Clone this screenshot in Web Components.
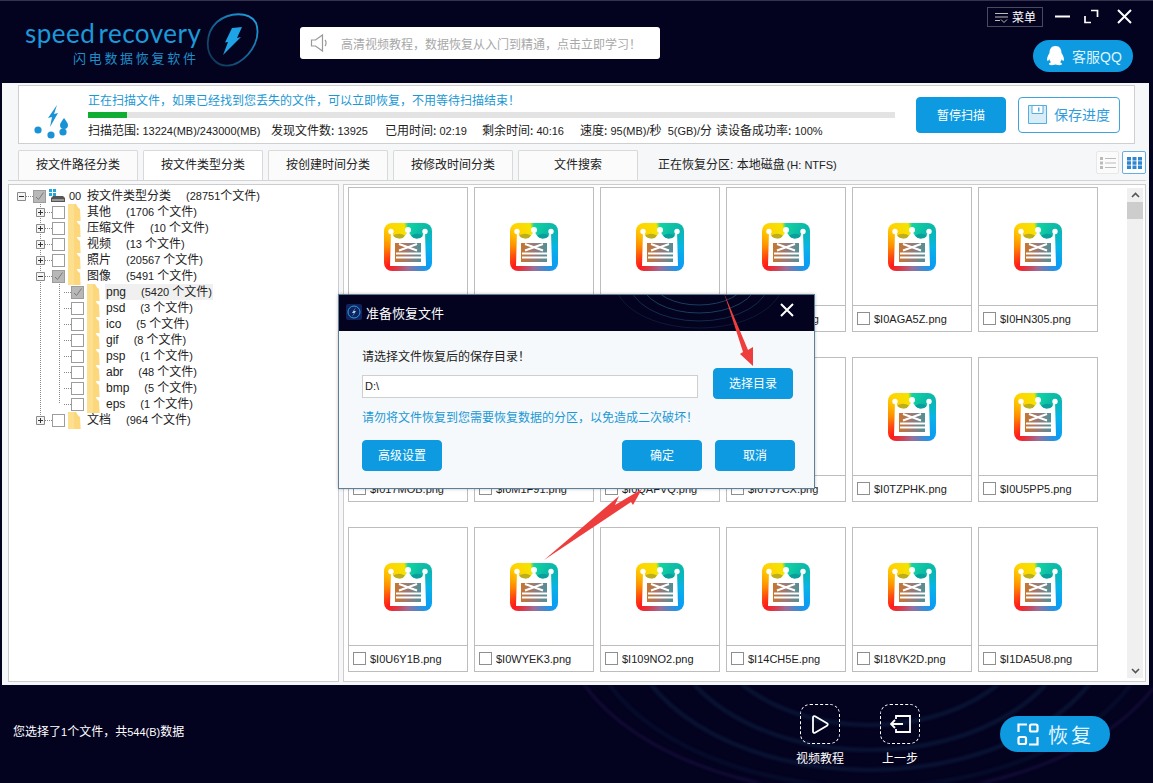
<!DOCTYPE html>
<html lang="zh">
<head>
<meta charset="utf-8">
<title>speed recovery</title>
<style>
  html, body { margin: 0; height: 100%; background: #03021f; }
  body { font: 12px "Liberation Sans", "Noto Sans CJK SC", sans-serif; color: #222; overflow: hidden; }
</style>
</head>
<body>
<sr-app>
  <sr-header slot="header"></sr-header>
  <sr-status slot="main"></sr-status>
  <sr-tabs slot="main">
    <sr-tab>按文件路径分类</sr-tab>
    <sr-tab active>按文件类型分类</sr-tab>
    <sr-tab>按创建时间分类</sr-tab>
    <sr-tab>按修改时间分类</sr-tab>
    <sr-tab>文件搜索</sr-tab>
    <span slot="info">正在恢复分区: 本地磁盘<small style="font-size:11px;margin-left:2px">(H: NTFS)</small></span>
  </sr-tabs>
  <sr-panels slot="main">
    <sr-tree slot="tree">
      <sr-tree-row depth="0" toggle="minus" check="on" icon="disk" num="00" count="(28751个文件)">按文件类型分类</sr-tree-row>
      <sr-tree-row depth="1" toggle="plus" count="(1706 个文件)">其他</sr-tree-row>
      <sr-tree-row depth="1" toggle="plus" count="(10 个文件)">压缩文件</sr-tree-row>
      <sr-tree-row depth="1" toggle="plus" count="(13 个文件)">视频</sr-tree-row>
      <sr-tree-row depth="1" toggle="plus" count="(20567 个文件)">照片</sr-tree-row>
      <sr-tree-row depth="1" toggle="minus" check="on" count="(5491 个文件)">图像</sr-tree-row>
      <sr-tree-row depth="2" check="on" selected count="(5420 个文件)">png</sr-tree-row>
      <sr-tree-row depth="2" count="(3 个文件)">psd</sr-tree-row>
      <sr-tree-row depth="2" count="(5 个文件)">ico</sr-tree-row>
      <sr-tree-row depth="2" count="(8 个文件)">gif</sr-tree-row>
      <sr-tree-row depth="2" count="(1 个文件)">psp</sr-tree-row>
      <sr-tree-row depth="2" count="(48 个文件)">abr</sr-tree-row>
      <sr-tree-row depth="2" count="(5 个文件)">bmp</sr-tree-row>
      <sr-tree-row depth="2" last count="(1 个文件)">eps</sr-tree-row>
      <sr-tree-row depth="1" toggle="plus" last count="(964 个文件)">文档</sr-tree-row>
    </sr-tree>
    <sr-file-grid slot="files">
      <sr-file-card></sr-file-card>
      <sr-file-card></sr-file-card>
      <sr-file-card></sr-file-card>
      <sr-file-card>$I0A2K7E.png</sr-file-card>
      <sr-file-card>$I0AGA5Z.png</sr-file-card>
      <sr-file-card>$I0HN305.png</sr-file-card>
      <sr-file-card>$I017MOB.png</sr-file-card>
      <sr-file-card>$I0M1F91.png</sr-file-card>
      <sr-file-card>$I0QAFVQ.png</sr-file-card>
      <sr-file-card>$I0TJ7CX.png</sr-file-card>
      <sr-file-card>$I0TZPHK.png</sr-file-card>
      <sr-file-card>$I0U5PP5.png</sr-file-card>
      <sr-file-card>$I0U6Y1B.png</sr-file-card>
      <sr-file-card>$I0WYEK3.png</sr-file-card>
      <sr-file-card>$I109NO2.png</sr-file-card>
      <sr-file-card>$I14CH5E.png</sr-file-card>
      <sr-file-card>$I18VK2D.png</sr-file-card>
      <sr-file-card>$I1DA5U8.png</sr-file-card>
    </sr-file-grid>
  </sr-panels>
  <sr-footer slot="footer"></sr-footer>
  <sr-dialog slot="overlay"></sr-dialog>
  <sr-arrows slot="overlay"></sr-arrows>
</sr-app>

<script>
// little base class, every component just returns its markup
class Comp extends HTMLElement {
  constructor() {
    super();
    this.attachShadow({ mode: "open" });
  }
  connectedCallback() {
    this.shadowRoot.innerHTML = this.render();
  }
}

const BLUE = "#0d9ae0";

class SrApp extends Comp {
  render() {
    return `<style>
      :host { display: flex; flex-direction: column; width: 1153px; height: 783px; position: relative; overflow: hidden; }
      .main { flex: 1; min-height: 0; display: flex; flex-direction: column; background: #f5f7f8; margin: 0 4px 0 2px; padding: 2px 3px 3px 6px; box-sizing: border-box; }
    </style>
    <slot name="header"></slot>
    <div class="main"><slot name="main"></slot></div>
    <slot name="footer"></slot>
    <slot name="overlay"></slot>`;
  }
}

class SrHeader extends Comp {
  render() {
    return `<style>
      :host { display: flex; height: 83px; box-sizing: border-box; background: #03021f; border-top: 1px solid #34324c; padding-right: 20px; color: #fff; }
      .brand { width: 180px; margin-left: 25px; display: flex; flex-direction: column; }
      .name { font: 400 26px/30px Lato, sans-serif; color: #1b99d8; margin-top: 17px; white-space: nowrap; letter-spacing: .5px; word-spacing: -4px; }
      .sub { font: 13px/16px "Noto Sans CJK SC", sans-serif; color: #1f8fc9; letter-spacing: 2.7px; margin-top: 2px; margin-left: 48px; white-space: nowrap; }
      .ring { width: 60px; height: 70px; margin: 8px 0 0 -2px; flex: none; }
      .notice { width: 360px; height: 32px; margin: 26px 0 0 37px; background: #fff; border-radius: 3px; display: flex; align-items: center; box-sizing: border-box; padding-left: 10px; color: #a8a8a8; white-space: nowrap; flex: none; }
      .notice svg { margin-right: 11px; }
      .right { margin-left: auto; display: flex; flex-direction: column; align-items: flex-end; }
      .ctl { display: flex; align-items: center; margin-top: 5px; height: 21px; }
      .menu { width: 56px; height: 20px; box-sizing: border-box; border: 1px solid #4a4a5e; display: flex; align-items: center; justify-content: center; gap: 3px; font-size: 12px; margin-right: 12px; }
      .ctl svg.b { display: block; }
      .qq { width: 100px; height: 32px; margin-top: 13px; border-radius: 16px; background: ${BLUE}; display: flex; align-items: center; box-sizing: border-box; padding-left: 13px; gap: 7px; font-size: 14px; color: #dff3fd; }
    </style>
    <div class="brand">
      <div class="name">speed recovery</div>
      <div class="sub">闪电数据恢复软件</div>
    </div>
    <svg class="ring" viewBox="0 0 60 70">
      <defs><linearGradient id="rg" x1="1" y1="0" x2="0" y2="1"><stop offset="0" stop-color="#22a6ea"/><stop offset=".55" stop-color="#14608f"/><stop offset="1" stop-color="#0d2f4a"/></linearGradient></defs>
      <path d="M12 52C2 44 2 24 14 13 26 3 46 2 53 14c5 14-3 30-17 39-8 5-18 5-24-1z" fill="none" stroke="url(#rg)" stroke-width="1.800"/>
      <path d="M29 19l10-1-5 11 4-1-18 18 5-13-3 .5z" fill="#1ea3e6"/>
    </svg>
    <div class="notice">
      <svg width="20" height="20" viewBox="0 0 20 20" fill="none" stroke="#999" stroke-width="1.200"><path d="M1.500 7h4l7-5v16l-7-5h-4z"/><path d="M15 7c1.400 1.500 1.400 4.500 0 6"/></svg>
      <span>高清视频教程，数据恢复从入门到精通，点击立即学习！</span>
    </div>
    <div class="right">
      <div class="ctl">
        <div class="menu">
          <svg width="15" height="12" viewBox="0 0 15 12" fill="none" stroke="#bbb"><path d="M1 2.500h13M1 6h13M1 9.500h5M7 8.500l3 3 3-3"/></svg>
          <span>菜单</span>
        </div>
        <svg class="b" width="15" height="15" viewBox="0 0 15 15" stroke="#fff" stroke-width="2" fill="none" style="margin-right:14px"><path d="M0 7.500h15"/></svg>
        <svg class="b" width="15" height="15" viewBox="0 0 15 15" stroke="#fff" stroke-width="1.700" fill="none" style="margin-right:18px"><path d="M1 7v6.500h6M7 1.500h6.500V8"/></svg>
        <svg class="b" width="15" height="15" viewBox="0 0 15 15" stroke="#fff" stroke-width="2" fill="none" style="margin-right:1px"><path d="M1 1l13 13M14 1L1 14"/></svg>
      </div>
      <div class="qq">
        <svg width="19" height="20" viewBox="0 0 19 20" fill="#fff"><path d="M9.500 0C5 0 3.500 3.500 3.500 7 2.500 8.500 1 11 1 13.500c0 1.200.6 1.500 1.400 1 .3-.3.600-.7.900-1.200.3 1.200 1 2.300 1.800 3-1.200.4-2.100 1-2.100 1.800C3 19.500 6 19.600 9.500 18.500c3.500 1.100 6.500 1 6.500-.4 0-.8-.9-1.400-2.100-1.800.8-.7 1.500-1.800 1.800-3 .3.500.6.900.9 1.200.8.500 1.400.2 1.400-1 0-2.500-1.500-5-2.500-6.500 0-3.500-1.500-7-6-7z"/></svg>
        <span>客服QQ</span>
      </div>
    </div>`;
  }
}

class SrStatus extends Comp {
  render() {
    return `<style>
      :host { display: flex; height: 59px; box-sizing: border-box; margin: 0 11px 0 10px; background: #fff; border: 1px solid #cfcfcf; }
      .drop { width: 69px; flex: none; }
      .drop svg { display: block; margin: 19px 0 0 15px; }
      .col { width: 807px; flex: none; }
      .msg { color: #1b98d4; line-height: 17px; margin-top: 7px; white-space: nowrap; }
      .bar { height: 6px; margin-top: 2px; background: #e3e3e3; }
      .bar i { display: block; height: 100%; width: 39px; background: #10ad33; }
      .stats { display: flex; margin-top: 3px; line-height: 17px; white-space: nowrap; font-size: 11px; }
      .stats b { font: 12px "Noto Sans CJK SC", sans-serif; }
      .stats span { flex: none; }
      .btns { display: flex; margin-left: 21px; margin-top: 11px; gap: 12px; }
      sr-btn { width: 90px; height: 36px; }
      sr-btn.out { width: 102px; font-size: 14px; }
    </style>
    <div class="drop">
      <svg width="40" height="36" viewBox="0 0 40 36" fill="#1a93d6">
        <path d="M21 0l-3 9 4-1-8 14 2-10-4 1z" transform="translate(2 0)"/>
        <path d="M30 13c2 3 4 5 4 7a4 4 0 0 1-8 0c0-2 2-4 4-7z"/>
        <circle cx="4" cy="25" r="3.600"/><circle cx="17" cy="30" r="3.600"/><circle cx="29" cy="27" r="3.600"/>
      </svg>
    </div>
    <div class="col">
      <div class="msg">正在扫描文件，如果已经找到您丢失的文件，可以立即恢复，不用等待扫描结束！</div>
      <div class="bar"><i></i></div>
      <div class="stats">
        <span style="width:183px"><b>扫描范围:</b> 13224(MB)/243000(MB)</span>
        <span style="width:114px"><b>发现文件数:</b> 13925</span>
        <span style="width:97px"><b>已用时间:</b> 02:19</span>
        <span style="width:98px"><b>剩余时间:</b> 40:16</span>
        <span style="width:136px"><b>速度:</b> 95(MB)/<b>秒</b>&nbsp; 5(GB)/<b>分</b></span>
        <span><b>读设备成功率:</b> 100%</span>
      </div>
    </div>
    <div class="btns">
      <sr-btn>暂停扫描</sr-btn>
      <sr-btn class="out" outline>
        <svg slot="icon" width="19" height="19" viewBox="0 0 19 19"><path d="M.5.5h18v18H.5z" fill="#d9edf9" stroke="#55aee0"/><path d="M4 .5h11v8H4z" fill="#fff" stroke="#55aee0"/><path d="M10 2.500h1.500v4H10z" fill="#55aee0"/></svg>
        保存进度
      </sr-btn>
    </div>`;
  }
}

class SrBtn extends Comp {
  render() {
    const out = this.hasAttribute("outline");
    return `<style>
      :host { display: block; }
      div { height: 100%; box-sizing: border-box; border-radius: 4px; display: flex; align-items: center; justify-content: center; gap: 7px; padding-bottom: 2px;
        background: ${out ? "#fff" : BLUE}; color: ${out ? "#2f9cdc" : "#fff"}; border: 1px solid ${out ? "#3fa3de" : BLUE}; white-space: nowrap; }
    </style><div><slot name="icon"></slot><slot></slot></div>`;
  }
}

class SrTabs extends Comp {
  render() {
    return `<style>
      :host { display: flex; align-items: flex-start; height: 31px; box-sizing: border-box; margin-top: 6px; border-bottom: 1px solid #d4d4d4; padding-left: 10px; gap: 5px; }
      .info { margin-left: 15px; line-height: 30px; white-space: nowrap; }
      .view { margin-left: auto; display: flex; gap: 3px; margin-top: 1px; }
      .v { width: 23px; height: 23px; box-sizing: border-box; border: 1px solid #e8e8e8; background: #fbfbfb; border-radius: 2px; display: flex; align-items: center; justify-content: center; }
      .v.on { border-color: #64aee2; background: #fff; width: 24px; }
    </style>
    <slot></slot>
    <div class="info"><slot name="info"></slot></div>
    <div class="view">
      <div class="v"><svg width="16" height="12" viewBox="0 0 16 12" fill="#bbb"><path d="M0 0h3v3H0zM0 4.500h3v3H0zM0 9h3v3H0zM5 1h11v1H5zM5 5.500h11v1H5zM5 10h11v1H5z"/></svg></div>
      <div class="v on"><svg width="15" height="12" viewBox="0 0 15 12" fill="#2d86cf"><path d="M0 0h4v3.400H0zM5.500 0h4v3.400h-4zM11 0h4v3.400h-4zM0 4.300h4v3.400H0zM5.500 4.300h4v3.400h-4zM11 4.300h4v3.400h-4zM0 8.600h4V12H0zM5.500 8.600h4V12h-4zM11 8.600h4V12h-4z"/></svg></div>
    </div>`;
  }
}

class SrTab extends Comp {
  render() {
    return `<style>
      :host { display: block; width: 120px; height: 30px; box-sizing: border-box; border: 1px solid #d9d9d9; border-bottom: 0; border-radius: 2px 2px 0 0; background: ${this.hasAttribute("active") ? "#fff" : "#fbfbfb"}; text-align: center; line-height: 29px; white-space: nowrap; }
    </style><slot></slot>`;
  }
}

class SrPanels extends Comp {
  render() {
    return `<style>
      :host { display: flex; flex: 1; min-height: 0; gap: 4px; margin-top: 3px; }
    </style>
    <slot name="tree"></slot><slot name="files"></slot>`;
  }
}

class SrTree extends Comp {
  render() {
    return `<style>
      :host { display: block; width: 331px; box-sizing: border-box; flex: none; background: #fff; border: 1px solid #ccc; padding-top: 3px; }
    </style><slot></slot>`;
  }
}

class SrTreeRow extends Comp {
  render() {
    const depth = +this.getAttribute("depth");
    const toggle = this.getAttribute("toggle");
    const checked = this.getAttribute("check") === "on";
    const icon = this.getAttribute("icon");
    const num = this.getAttribute("num");
    const count = this.getAttribute("count").replace("个文件", '<span class="c">个文件</span>');
    const last = this.hasAttribute("last");
    const dots = "repeating-linear-gradient(to bottom,#888 0 1px,transparent 1px 2px)";
    // vertical guide lines are painted on the row itself
    const guides = [];
    if (depth >= 1) guides.push(`${dots} 31px 0/1px ${depth === 1 && last ? "8px" : "100%"} no-repeat`);
    if (depth === 2) guides.push(`${dots} 50px 0/1px ${last ? "8px" : "100%"} no-repeat`);
    const pad = [8, 27, 46][depth];
    const tog = toggle
      ? `<svg class="t" width="9" height="9" viewBox="0 0 9 9"><path d="M.5.5h8v8h-8z" fill="#f4f4f4" stroke="#8a8a8a"/><path d="M2 4.500h5${toggle === "plus" ? "M4.500 2v5" : ""}" stroke="#333"/></svg>`
      : `<span class="t"></span>`;
    const pic = icon === "disk"
      ? `<svg class="pic" width="16" height="14" viewBox="0 0 16 14"><path d="M0 0h3v3H0zM4 0h3v3H4zM0 4h3v3H0zM4 4h3v3H4z" fill="#22a5d8"/><path d="M2 9l2-2h10l2 2v4H2z" fill="#555"/><path d="M3 11h12" stroke="#ddd"/></svg>`
      : `<svg class="pic" width="13" height="17" viewBox="0 0 13 17"><path d="M0 0h8l2 3.500 2 1.500.6 12H0z" fill="#fcd77c"/><path d="M0 0h6v17H0z" fill="#fde08f"/></svg>`;
    return `<style>
      :host { display: flex; align-items: center; height: 16px; padding-left: ${pad}px; background: ${guides.join(",") || "none"}; white-space: nowrap; font-size: 11px; }
      .t { width: 9px; height: 9px; flex: none; display: block; ${depth === 2 ? "" : "background:#fff;"} }
      .h { width: 7px; height: 1px; flex: none; background: repeating-linear-gradient(to right,#888 0 1px,transparent 1px 2px); }
      .box { width: 13px; height: 13px; box-sizing: border-box; flex: none; border: 1px solid #9c9c9c; background: ${checked ? "#b8b8b8" : "#fff"}; display: flex; }
      .pic { flex: none; margin-left: 3px; display: block; }
      .num { margin-left: 4px; width: 13px; flex: none; }
      .name { font-size: 12px; margin-left: 1px; display: flex; height: 16px; line-height: 16px; }
      .count { margin-left: 15px; line-height: 16px; }
      .c { font-size: 12px; }
      .sel { display: flex; background: ${this.hasAttribute("selected") ? "#f0f0f0" : "transparent"}; padding-right: 1px; margin-left: ${depth === 0 ? 4 : 5}px; }
    </style>
    ${tog}<span class="h"></span>
    <span class="box">${checked ? `<svg width="11" height="11" viewBox="0 0 11 11" fill="none" stroke="#7c7c7c"><path d="M2 6l2.500 2.500L9.500 1.500"/></svg>` : ""}</span>
    ${pic}${num ? `<span class="num">${num}</span>` : ""}
    <span class="sel"><span class="name"><slot></slot></span><span class="count">${count}</span></span>`;
  }
}

class SrFileGrid extends Comp {
  render() {
    return `<style>
      :host { display: flex; flex: 1; min-width: 0; background: #fff; border: 1px solid #ccc; overflow: hidden; }
      .cells { flex: 1; display: grid; grid-template-columns: repeat(6, 120px); grid-auto-rows: 145px; column-gap: 6px; row-gap: 25px; padding: 2px 0 0 4px; align-content: start; overflow: hidden; }
      .sb { width: 16px; flex: none; margin: 3px 2px 3px 0; background: #f0f0f0; display: flex; flex-direction: column; align-items: center; }
      .sb svg { display: block; flex: none; margin: 4px 0; }
      .thumb { width: 16px; height: 17px; background: #cdcdcd; }
      .sp { flex: 1; }
    </style>
    <div class="cells"><slot></slot></div>
    <div class="sb">
      <svg width="9" height="6" viewBox="0 0 9 6" fill="none" stroke="#555" stroke-width="1.600"><path d="M1 5l3.500-3.500L8 5"/></svg>
      <div class="thumb"></div><div class="sp"></div>
      <svg width="9" height="6" viewBox="0 0 9 6" fill="none" stroke="#555" stroke-width="1.600"><path d="M1 1l3.500 3.500L8 1"/></svg>
    </div>`;
  }
}

class SrFileCard extends Comp {
  render() {
    return `<style>
      :host { display: flex; flex-direction: column; box-sizing: border-box; border: 1px solid #bdbdbd; background: #fff; }
      .img { flex: 1; display: flex; align-items: center; justify-content: center; }
      .lab { height: 25px; flex: none; border-top: 1px solid #bdbdbd; display: flex; align-items: center; padding-left: 4px; font-size: 11px; white-space: nowrap; overflow: hidden; }
      .box { width: 13px; height: 13px; box-sizing: border-box; border: 1px solid #8f8f8f; margin-right: 4px; flex: none; }
    </style>
    <div class="img"><sr-app-icon></sr-app-icon></div>
    <div class="lab"><span class="box"></span><slot></slot></div>`;
  }
}

class SrAppIcon extends Comp {
  render() {
    return `<style>
      :host { display: block; width: 48px; height: 48px; border-radius: 8px; overflow: hidden;
        background: conic-gradient(from 0deg at 50% 50%, #12d5a0 0deg, #0bb8a8 45deg, #08b4e6 90deg, #0a9cf5 135deg, #9a6f9a 180deg, #ff1a1a 225deg, #ff8a00 270deg, #ffd400 315deg, #f4e400 350deg, #12d5a0 360deg); }
      svg { display: block; }
    </style>
    <svg width="48" height="48" viewBox="0 0 48 48">
      <defs><linearGradient id="doc"><stop offset="0" stop-color="#c9752c"/><stop offset=".5" stop-color="#9b7a78"/><stop offset="1" stop-color="#4f9098"/></linearGradient></defs>
      <path d="M7 8Q10 15 15.500 15.500 21 15 24 7 27 15 32.500 15.500 38 15 41 8L42 43H6z" fill="#fff"/>
      <circle cx="7" cy="8.500" r="2.700" fill="#fff"/><circle cx="24" cy="7" r="3" fill="#fff"/><circle cx="41" cy="8.500" r="2.700" fill="#fff"/>
      <path d="M9 12.500Q15 9 21 12.500 19 16 15.500 15.500 11 15.500 9 12.500z" fill="#bcae1c"/>
      <path d="M27 12.500Q33 9 39 12.500 37 16 32.500 15.500 29 15.500 27 12.500z" fill="#0a9f9a"/>
      <rect x="11" y="20" width="26" height="19" fill="url(#doc)"/>
      <path d="M15 21l18 6.500M33 21L15 27.500M12 30.500h25M12 34.500h25" stroke="#fff" stroke-width="2" fill="none"/>
    </svg>`;
  }
}

class SrDialog extends Comp {
  render() {
    return `<style>
      :host { position: absolute; left: 338px; top: 294px; width: 477px; height: 195px; box-sizing: border-box; border: 1px solid #5f7f98; background: #f6f9fb; display: flex; flex-direction: column; box-shadow: 0 0 3px rgba(0,0,0,.25); }
      .title { height: 36px; flex: none; background: #03021f; color: #fff; display: flex; align-items: center; padding: 0 20px 2px 7px; box-sizing: border-box; font-size: 13px; overflow: hidden; position: relative; }
      .title .swirl { position: absolute; left: 270px; top: 0; filter: blur(.6px); }
      .title span { margin-left: 4px; position: relative; }
      .title .x { margin-left: auto; margin-bottom: 5px; position: relative; }
      .body { padding: 16px 19px 0 23px; flex: 1; display: flex; flex-direction: column; }
      .lab { line-height: 20px; }
      .row { display: flex; align-items: center; margin-top: 2px; }
      .inp { width: 336px; height: 23px; box-sizing: border-box; border: 1px solid #cfcfcf; background: #fff; line-height: 21px; padding-left: 2px; font-size: 11px; margin-top: 5px; }
      .row sr-btn { width: 80px; height: 31px; margin-left: 15px; margin-top: -1px; }
      .warn { color: #1b98d4; margin-top: 9px; line-height: 20px; white-space: nowrap; }
      .foot { display: flex; margin-top: 12px; }
      .foot sr-btn { width: 80px; height: 31px; }
      .foot sr-btn:nth-child(2) { margin-left: auto; margin-right: 13px; }
    </style>
    <div class="title">
      <svg class="swirl" width="210" height="36" viewBox="0 0 210 36" fill="none" stroke="#2d6f92" opacity=".55">
        <ellipse cx="90" cy="-14" rx="46" ry="24"/><ellipse cx="90" cy="-14" rx="58" ry="32"/><ellipse cx="90" cy="-14" rx="70" ry="40" opacity=".7"/><ellipse cx="90" cy="-14" rx="84" ry="47" opacity=".4"/>
      </svg>
      <svg width="16" height="16" viewBox="0 0 16 16" style="position:relative"><rect width="16" height="16" rx="2" fill="#10235e"/><circle cx="8" cy="8" r="6" fill="none" stroke="#2a9fe0"/><path d="M10 3L6 9h2l-2 4 4-6H8z" fill="#9fd6f5"/></svg>
      <span>准备恢复文件</span>
      <svg class="x" width="14" height="14" viewBox="0 0 14 14" stroke="#fff" stroke-width="2"><path d="M1 1l12 12M13 1L1 13"/></svg>
    </div>
    <div class="body">
      <div class="lab">请选择文件恢复后的保存目录！</div>
      <div class="row"><div class="inp">D:\\</div><sr-btn>选择目录</sr-btn></div>
      <div class="warn">请勿将文件恢复到您需要恢复数据的分区，以免造成二次破坏！</div>
      <div class="foot"><sr-btn>高级设置</sr-btn><sr-btn>确定</sr-btn><sr-btn>取消</sr-btn></div>
    </div>`;
  }
}

class SrArrows extends Comp {
  render() {
    return `<style>
      :host { position: absolute; left: 0; top: 0; width: 1153px; height: 783px; pointer-events: none; }
    </style>
    <svg width="1153" height="783" fill="#ee3d3d">
      <polygon points="724,293 748,350 753,347 753,366 740,354 743,352"/>
      <polygon points="544,560 631,502 633,505 642,489 615,505 619,496"/>
    </svg>`;
  }
}

class SrFooter extends Comp {
  render() {
    return `<style>
      :host { display: flex; height: 98px; flex: none; background: #03021f; color: #fff; position: relative; overflow: hidden; align-items: flex-start; }
      .bg { position: absolute; left: 0; top: 0; filter: blur(1.500px); }
      .sel { margin: 37px 0 0 13px; line-height: 18px; position: relative; white-space: nowrap; font-size: 11px; }
      .sel b { font: 12px "Noto Sans CJK SC", sans-serif; }
      .acts { margin-left: auto; display: flex; position: relative; margin-right: 14px; }
      .act { width: 48px; margin-right: 32px; display: flex; flex-direction: column; align-items: center; margin-top: 19px; white-space: nowrap; }
      .act .lb { margin-top: 6px; line-height: 18px; }
      .dash { width: 40px; height: 40px; box-sizing: border-box; border: 1px dashed #fff; border-radius: 10px; display: flex; align-items: center; justify-content: center; }
      .go { width: 110px; height: 36px; margin: 31px 43px 0 30px; border-radius: 18px; background: ${BLUE}; display: flex; align-items: center; box-sizing: border-box; padding-left: 17px; font-size: 20px; letter-spacing: 3px; gap: 9px; color: #e4f5fe; position: relative; }
    </style>
    <svg class="bg" width="1153" height="98" fill="none">
      <g stroke="#2b7fa6" opacity=".16" stroke-width="4"><ellipse cx="870" cy="-70" rx="165" ry="110"/><ellipse cx="870" cy="-70" rx="205" ry="135"/><ellipse cx="870" cy="-70" rx="245" ry="155"/><ellipse cx="870" cy="-70" rx="285" ry="172" opacity=".6"/></g>
      <ellipse cx="870" cy="-70" rx="310" ry="180" stroke="#4a2f86" opacity=".35" stroke-width="2"/>
    </svg>
    <div class="sel"><b>您选择了</b>1<b>个文件，共</b>544(B)<b>数据</b></div>
    <div class="acts">
      <div class="act"><div class="dash"><svg width="17" height="19" viewBox="0 0 17 19" fill="none" stroke="#fff" stroke-width="1.800" stroke-linejoin="round"><path d="M1 2.500c0-1.200 1-1.800 2-1.200l12 7c1 .6 1 1.800 0 2.400l-12 7c-1 .6-2 0-2-1.200z"/></svg></div><div class="lb">视频教程</div></div>
      <div class="act"><div class="dash"><svg width="21" height="18" viewBox="0 0 21 18" fill="none" stroke="#fff" stroke-width="1.800"><path d="M6 4V1h14v16H6v-3M1 9h12M5 5L1 9l4 4"/></svg></div><div class="lb">上一步</div></div>
    </div>
    <div class="go">
      <svg width="22" height="23" viewBox="0 0 22 23" fill="none" stroke="#fff" stroke-width="2.200"><path d="M10 1.500H1.500V9M20.500 14v7.500H12"/><rect x="13" y="1.500" width="7.500" height="7" rx="1.500"/><rect x="1.500" y="14" width="7.500" height="7" rx="1.500"/></svg>
      <span>恢复</span>
    </div>`;
  }
}

customElements.define("sr-app", SrApp);
customElements.define("sr-header", SrHeader);
customElements.define("sr-status", SrStatus);
customElements.define("sr-btn", SrBtn);
customElements.define("sr-tabs", SrTabs);
customElements.define("sr-tab", SrTab);
customElements.define("sr-panels", SrPanels);
customElements.define("sr-tree", SrTree);
customElements.define("sr-tree-row", SrTreeRow);
customElements.define("sr-file-grid", SrFileGrid);
customElements.define("sr-file-card", SrFileCard);
customElements.define("sr-app-icon", SrAppIcon);
customElements.define("sr-dialog", SrDialog);
customElements.define("sr-arrows", SrArrows);
customElements.define("sr-footer", SrFooter);
</script>
</body>
</html>
